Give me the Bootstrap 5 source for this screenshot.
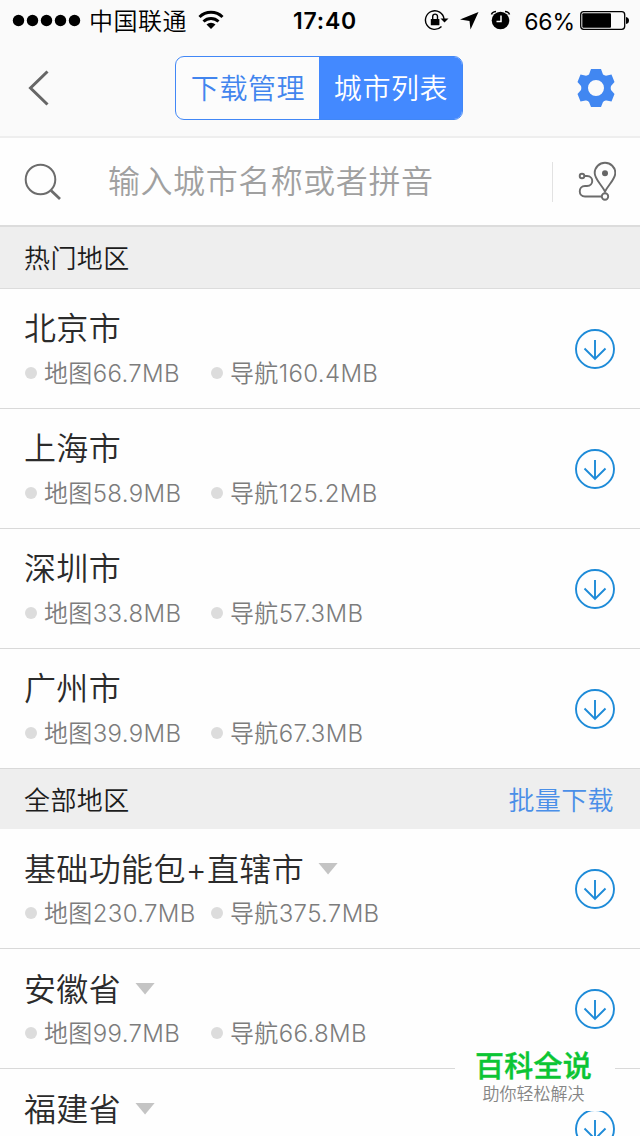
<!DOCTYPE html>
<html lang="zh-CN">
<head>
<meta charset="utf-8">
<meta name="viewport" content="width=device-width, initial-scale=1">
<title>城市列表</title>
<link href="https://cdn.jsdelivr.net/npm/bootstrap@5.3.0/dist/css/bootstrap.min.css" rel="stylesheet">
<style>
  body { font-family: Inter, "Noto Sans CJK SC", sans-serif; font-weight: 350; background: #fefefe; color: #2b2b2b; }
  .screen { width: 640px; height: 1136px; }
  .top-area { height: 138px; background: #fafafa; border-bottom: 2px solid #eee; }
  .status { height: 40px; color: #000; font-size: 24px; line-height: 40px; }
  .status svg { flex: none; }
  .signal { margin-left: 12px; }
  .carrier { margin-left: 8px; letter-spacing: .5px; padding-top: 4px; }
  .wifi { margin-left: 11px; }
  .clock { left: 0; right: 0; top: 1px; font-weight: 600; font-size: 23px; letter-spacing: .75px; padding-left: 10px; }
  .percent { font-size: 23px; letter-spacing: -.1px; font-weight: 400; padding-top: 3px; }
  .battery { margin-left: 4px; margin-right: 11px; }
  .titlebar { height: 96px; padding: 0 25px 0 23px; }
  .seg { width: 288px; height: 64px; border: 1px solid #4187f6; border-radius: 9px; font-size: 28px; letter-spacing: .6px; overflow: hidden; color: #4285ee; background: #fcfcfc; margin-left: -1px; }
  .seg > div { padding-top: 2px; padding-left: 2px; }
  .seg-on { background: #4389ff; color: #fff; }
  .search { height: 89px; border-bottom: 2px solid #dcdcdc; padding: 0 24px; }
  .hint { font-size: 32px; letter-spacing: .55px; color: #a0a0a0; margin-left: 46px; }
  .divide { width: 1px; height: 40px; background: #e2e2e2; }
  .route { margin-left: 23px; margin-top: -1px; }
  .sect { height: 60px; background: #eee; padding: 2px 26px 0 24px; font-size: 26px; letter-spacing: .4px; color: #1c1c1c; }
  .sect-first { height: 62px; border-bottom: 1px solid #dcdcdc; }
  .batch { color: #4a8fe8; }
  .region { height: 120px; border-bottom: 1px solid #d9d9d9; padding: 15px 25px 0 24px; }
  .region-name { font-size: 32px; line-height: 50px; height: 51px; letter-spacing: .35px; }
  .sizes { font-size: 24px; line-height: 38px; color: #7c7c7c; letter-spacing: .35px; }
  .sizes > div { width: 186px; white-space: nowrap; }
  .sizes > div::before { content: ""; display: inline-block; width: 12px; height: 12px; border-radius: 50%; background: #dcdcdc; margin: 0 7px 0 1px; vertical-align: 3px; }
  .caret { width: 20px; height: 12px; background: #c4c4c4; clip-path: polygon(0 0, 100% 0, 50% 100%); margin-left: 14px; margin-top: -2px; }
  .dl { width: 40px; height: 40px; margin-top: 25px; }
  .mark-box { left: 455px; top: 1042px; width: 160px; height: 69px; background: #fefefe; text-align: center; padding-right: 3px; }
  .mark-title { font-size: 29px; font-weight: 500; -webkit-text-stroke: .4px #0bc534; line-height: 40px; color: #0bc534; padding-top: 5px; letter-spacing: .3px; }
  .mark-sub { font-size: 17px; line-height: 14px; color: #858585; }
</style>
</head>
<body>
<svg width="0" height="0" class="position-absolute">
  <symbol id="down" viewBox="0 0 40 40"><g fill="none" stroke="#1e8bd8" stroke-width="1.9"><circle cx="20" cy="20" r="19"/><path d="M20 11V30M9.500 19.500L20 30L30.500 19.500"/></g></symbol>
</svg>
<main class="screen position-relative overflow-hidden">
  <header class="top-area">
    <div class="status d-flex align-items-center position-relative">
      <svg width="69" height="40" class="signal" viewBox="0 0 69 40"><circle cx="6.500" cy="20.500" r="5.700"/><circle cx="20.500" cy="20.500" r="5.700"/><circle cx="34.500" cy="20.500" r="5.700"/><circle cx="48.500" cy="20.500" r="5.700"/><circle cx="62.500" cy="20.500" r="5.700"/></svg>
      <span class="carrier">中国联通</span>
      <svg width="26" height="20" class="wifi" viewBox="0 0 26 20"><g fill="none" stroke="#000" stroke-width="3"><path d="M1.500 7A16.500 16.500 0 0 1 24.500 7M5.500 11.500A11 11 0 0 1 20.500 11.500"/></g><path d="M8.500 14.500A6.500 6.500 0 0 1 17.500 14.500L13 19Z"/></svg>
      <span class="clock position-absolute text-center">17:40</span>
      <div class="d-flex align-items-center ms-auto">
        <svg width="88" height="24" viewBox="426 8 88 24"><path d="M443.500 26.500A9.300 9.300 0 1 1 446 19" fill="none" stroke="#000" stroke-width="1.400"/><path d="M442.500 18.500H450.500L446.500 22.500Z"/><rect x="432.800" y="19" width="8.600" height="6.300" rx=".6"/><path d="M434.700 19V16.500a2.400 2.400 0 0 1 4.800 0V19" fill="none" stroke="#000" stroke-width="1.400"/><path d="M480.500 12L472.500 29.500L471.500 21L462 19.500Z"/><circle cx="502.500" cy="20.500" r="8.800"/><path d="M503 15.500V21.500H498.500" fill="none" stroke="#fff" stroke-width="1.500"/><path d="M493.500 14.500Q494 12 498 11.500M507 11.500Q511 12 511.500 14.500" fill="none" stroke="#000" stroke-width="1.500"/></svg>
        <span class="percent ms-2 ps-1">66%</span>
        <svg width="50" height="20" class="battery" viewBox="579 10 50 20"><rect x="580.700" y="11.700" width="44" height="17.600" rx="3" fill="none" stroke="#000" stroke-width="1.300"/><rect x="582.300" y="13.300" width="28.700" height="14.400" rx="1"/><path d="M626 17q3 .5 3 3.500t-3 3.500Z"/></svg>
      </div>
    </div>
    <nav class="titlebar d-flex align-items-center justify-content-between">
      <svg width="38" height="38" viewBox="23 69 38 38"><path d="M47.500 71.500L30.500 88L47.500 104.500" fill="none" stroke="#666" stroke-width="3"/></svg>
      <div class="seg d-flex text-center">
        <div class="w-50 d-flex align-items-center justify-content-center">下载管理</div>
        <div class="w-50 d-flex align-items-center justify-content-center seg-on">城市列表</div>
      </div>
      <svg width="38" height="38" viewBox="-19 -19 38 38"><path fill="#4187f1" fill-rule="evenodd" d="M-5-19H5L7-13.500Q9-12 11-12.500L15.500-13.500L18.500-6L15-2Q14.300 0 15 2L18.500 6L15.500 13.500L10.500 12.500Q8.500 12 7 14L5 19H-5L-7 14Q-8.500 12-10.500 12.500L-15.500 13.500L-18.500 6L-15 2Q-14.300 0-15-2L-18.500-6L-15.500-13.500L-11-12.500Q-9-12-7-13.500ZM0-8A8 8 0 1 0 0 8A8 8 0 1 0 0-8Z"/></svg>
    </nav>
  </header>

  <div class="search d-flex align-items-center">
    <svg width="38" height="38" viewBox="24 162 38 38"><g fill="none" stroke="#6c6c6c"><circle cx="40.500" cy="178.500" r="14.800" stroke-width="2"/><path d="M51 189.500L60 198" stroke-width="2.800"/></g></svg>
    <span class="hint">输入城市名称或者拼音</span>
    <span class="divide ms-auto"></span>
    <svg width="40" height="40" class="route" viewBox="576 161 40 40"><g fill="none" stroke="#6b6b6b" stroke-width="1.900"><circle cx="582" cy="176" r="2.300"/><path d="M584.500 176H587C594 176 594 186 587 186H585C578 186 578 196.500 585 196.500H601.500"/><circle cx="605" cy="196.500" r="3.200"/><path d="M605 191.500C601 184 594.700 179 594.700 173A10.300 10.300 0 0 1 615.300 173C615.300 179 609 184 605 191.500Z"/></g><circle cx="605" cy="173.300" r="3" fill="#666"/></svg>
  </div>

  <section>
    <div class="sect sect-first d-flex align-items-center">热门地区</div>
    <div class="region d-flex justify-content-between"><div><div class="region-name">北京市</div><div class="sizes d-flex"><div>地图66.7MB</div><div>导航160.4MB</div></div></div><svg class="dl"><use href="#down"/></svg></div>
    <div class="region d-flex justify-content-between"><div><div class="region-name">上海市</div><div class="sizes d-flex"><div>地图58.9MB</div><div>导航125.2MB</div></div></div><svg class="dl"><use href="#down"/></svg></div>
    <div class="region d-flex justify-content-between"><div><div class="region-name">深圳市</div><div class="sizes d-flex"><div>地图33.8MB</div><div>导航57.3MB</div></div></div><svg class="dl"><use href="#down"/></svg></div>
    <div class="region d-flex justify-content-between"><div><div class="region-name">广州市</div><div class="sizes d-flex"><div>地图39.9MB</div><div>导航67.3MB</div></div></div><svg class="dl"><use href="#down"/></svg></div>
  </section>
  <section>
    <div class="sect d-flex align-items-center justify-content-between"><span>全部地区</span><span class="batch">批量下载</span></div>
    <div class="region d-flex justify-content-between"><div><div class="region-name d-flex align-items-center">基础功能包+直辖市<i class="caret"></i></div><div class="sizes d-flex"><div>地图230.7MB</div><div>导航375.7MB</div></div></div><svg class="dl"><use href="#down"/></svg></div>
    <div class="region d-flex justify-content-between"><div><div class="region-name d-flex align-items-center">安徽省<i class="caret"></i></div><div class="sizes d-flex"><div>地图99.7MB</div><div>导航66.8MB</div></div></div><svg class="dl"><use href="#down"/></svg></div>
    <div class="region d-flex justify-content-between"><div><div class="region-name d-flex align-items-center">福建省<i class="caret"></i></div></div><svg class="dl"><use href="#down"/></svg></div>
  </section>

  <aside class="mark-box position-absolute">
    <div class="mark-title">百科全说</div>
    <div class="mark-sub">助你轻松解决</div>
  </aside>
</main>
<script src="https://cdn.jsdelivr.net/npm/bootstrap@5.3.0/dist/js/bootstrap.bundle.min.js"></script>
</body>
</html>
